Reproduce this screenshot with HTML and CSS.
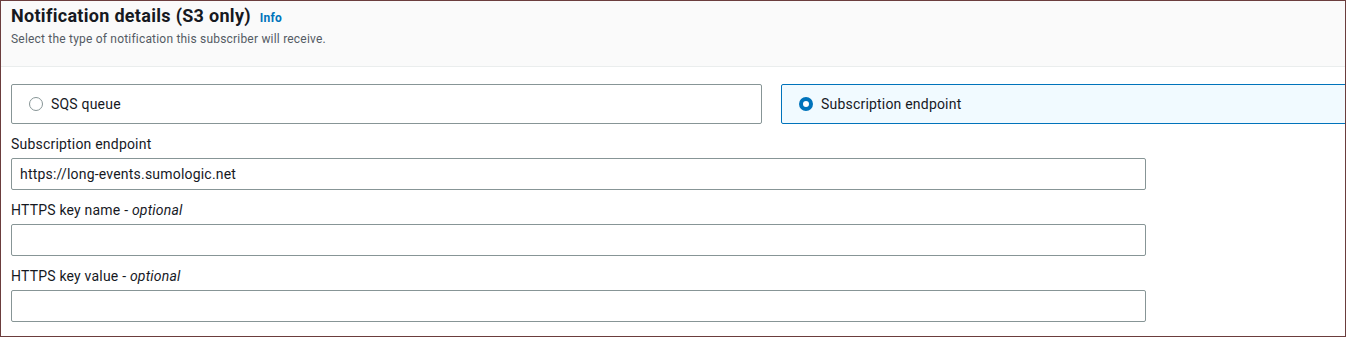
FILE: index.html
```html
<!DOCTYPE html>
<html lang="en">
<head>
    <meta charset="UTF-8">
    <title>Notification details</title>
    <link rel="stylesheet" href="styles.css">
</head>
<body>
    <div class="panel">
        <div class="panel-header">
            <h2 class="title">Notification details (S3 only) <a class="info" href="#">Info</a></h2>
            <p class="subtitle">Select the type of notification this subscriber will receive.</p>
        </div>

        <div class="panel-body">
            <div class="tiles">
                <label class="tile">
                    <span class="radio"></span>
                    <span>SQS queue</span>
                </label>
                <label class="tile tile-selected">
                    <span class="radio radio-checked"></span>
                    <span>Subscription endpoint</span>
                </label>
            </div>

            <div class="field">
                <div class="field-label">Subscription endpoint</div>
                <input class="text-input" type="text" value="https://long-events.sumologic.net">
            </div>

            <div class="field">
                <div class="field-label">HTTPS key name - <i>optional</i></div>
                <input class="text-input" type="text">
            </div>

            <div class="field">
                <div class="field-label">HTTPS key value - <i>optional</i></div>
                <input class="text-input" type="text">
            </div>
        </div>
    </div>
</body>
</html>
```

FILE: styles.css
```css
body {
    margin: 0;
    font-family: Roboto, "Noto Sans", Arial, sans-serif;
    letter-spacing: 0.2px;
    color: #16191f;
    background: #fff;
}

.panel {
    height: 337px;
    box-sizing: border-box;
    border: 1px solid #6b3d3d;
    overflow: hidden;
}

.panel-header {
    background-color: #fafafa;
    border-bottom: 1px solid #eaeded;
    padding: 4px 10px 0;
    height: 61px;
}

.title {
    margin: 0;
    font-size: 18px;
    line-height: 22px;
    font-weight: 700;
    letter-spacing: 0.3px;
}

.info {
    color: #0073bb;
    font-size: 12px;
    font-weight: 700;
    text-decoration: none;
    margin-left: 4px;
}

.subtitle {
    margin: 2px 0 0;
    font-size: 12px;
    line-height: 16px;
    color: #545b64;
}

.panel-body {
    padding: 17px 0 0 10px;
}

.tiles {
    display: grid;
    grid-template-columns: 751px 600px;
    column-gap: 19px;
}

.tile {
    display: flex;
    align-items: center;
    gap: 8px;
    height: 40px;
    box-sizing: border-box;
    padding-left: 17px;
    border: 1px solid #879596;
    border-radius: 2px;
    font-size: 14px;
}

.tile-selected {
    background-color: #f1faff;
    border-color: #0073bb;
}

.radio {
    width: 14px;
    height: 14px;
    box-sizing: border-box;
    border: 1px solid #879596;
    border-radius: 50%;
    background: #fff;
}

.radio-checked {
    border: 4px solid #0073bb;
}

.field {
    margin-top: 10px;
}

.field-label {
    font-size: 14px;
    line-height: 20px;
    margin-bottom: 4px;
}

.text-input {
    display: block;
    width: 1135px;
    height: 32px;
    box-sizing: border-box;
    border: 1px solid #879596;
    border-radius: 2px;
    padding: 0 8px;
    font-family: inherit;
    font-size: 14px;
    letter-spacing: inherit;
    color: #16191f;
}
```
